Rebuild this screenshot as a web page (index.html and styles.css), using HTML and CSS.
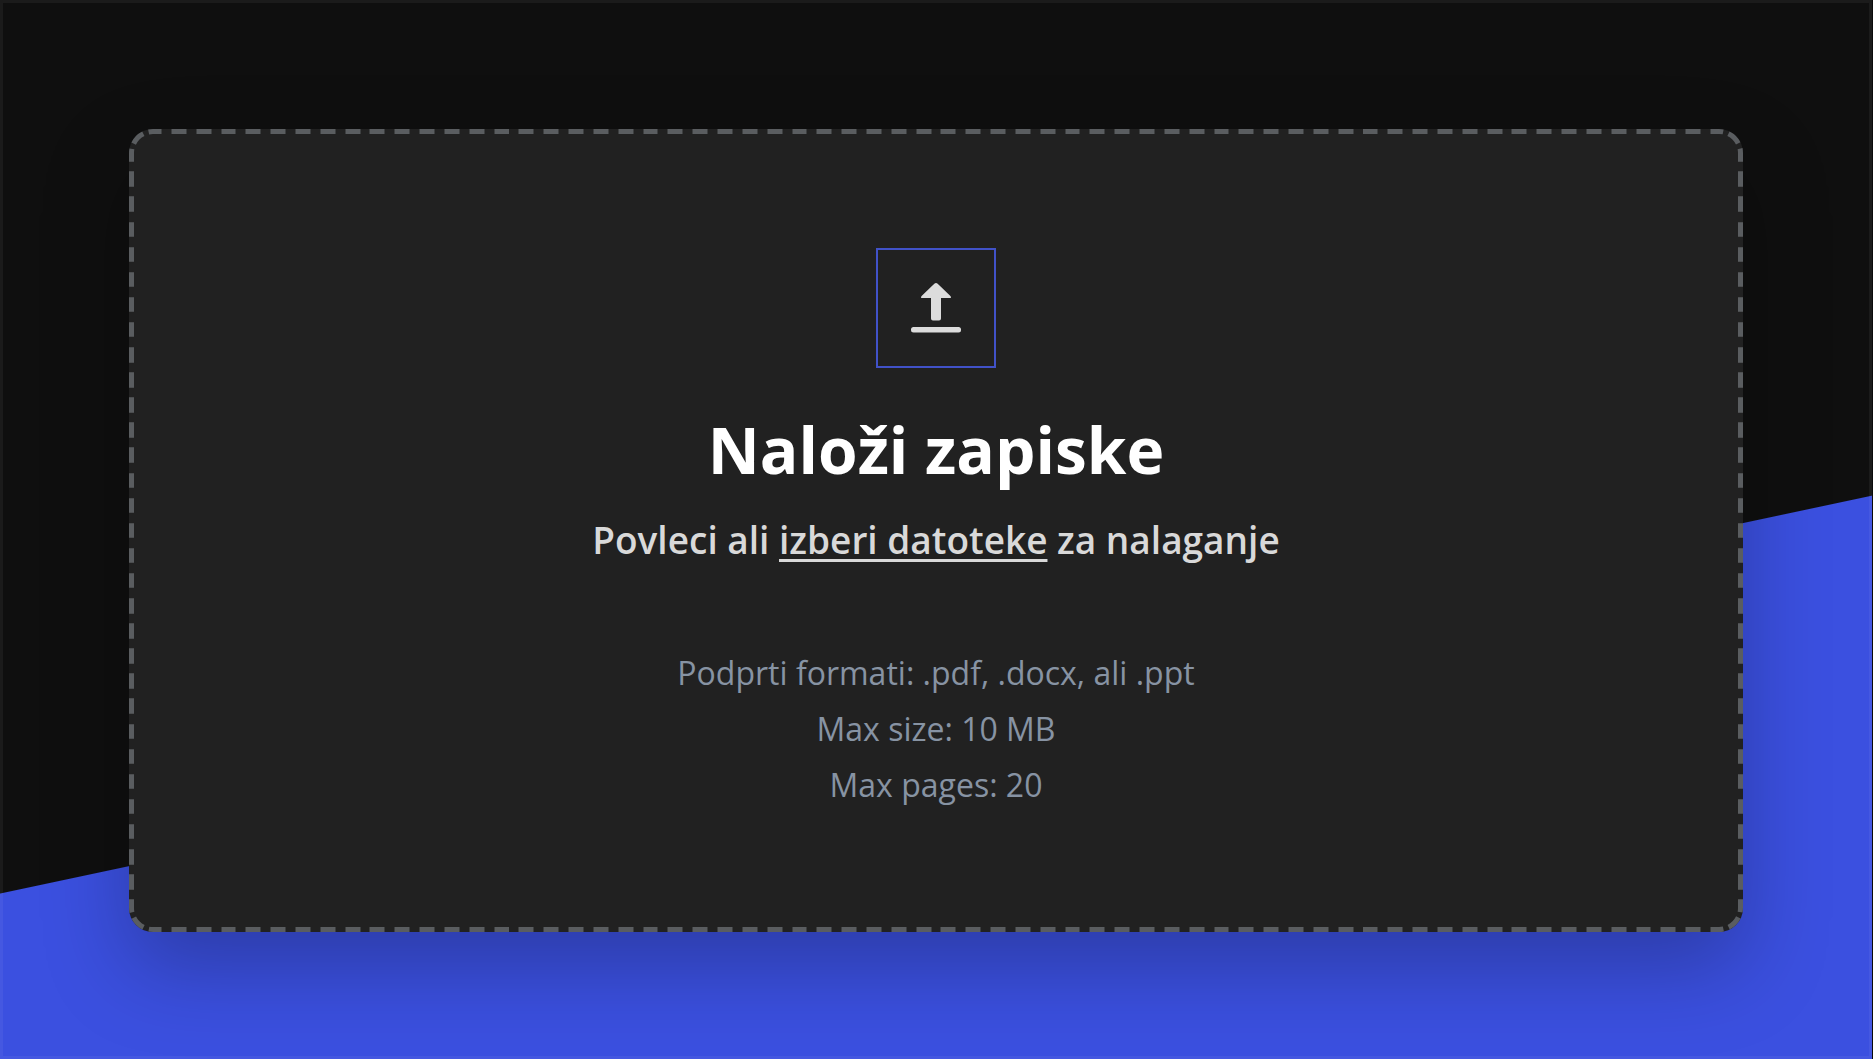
FILE: index.html
```html
<!DOCTYPE html>
<html lang="sl">

<head>
  <meta charset="UTF-8">
  <meta name="viewport" content="width=device-width, initial-scale=1.0">
  <title>Naloži zapiske</title>
  <link rel="stylesheet" href="styles.css">
</head>

<body>
  <main class="page">
    <section class="dropzone">
      <div class="icon-box">
        <svg class="upload-icon" viewBox="0 0 52 52" aria-hidden="true">
          <path d="M24.3 1.8Q26 .2 27.7 1.8L40.4 14Q42 16 39.6 16H31V36.5Q31 38.5 29 38.5H23Q21 38.5 21 36.5V16H12.4Q10 16 11.6 14Z" />
          <rect x="1" y="45" width="50" height="5.5" rx="2.5" />
        </svg>
      </div>
      <h1 class="title">Naloži zapiske</h1>
      <p class="subtitle">Povleci ali <a href="#" class="choose">izberi datoteke</a> za nalaganje</p>
      <div class="info">
        <p>Podprti formati: .pdf, .docx, ali .ppt</p>
        <p>Max size: 10 MB</p>
        <p>Max pages: 20</p>
      </div>
    </section>
  </main>
</body>

</html>
```
FILE: styles.css
```css
* {
  box-sizing: border-box;
  margin: 0;
  padding: 0;
}

body {
  font-family: "Open Sans", "Noto Sans", sans-serif;
  background-color: #0f0f0f;
}

.page {
  position: relative;
  display: flex;
  min-height: 100vh;
  padding: 129px 129px 127px;
  border-right: 1px solid #0a0a0a;
  background: linear-gradient(168deg, #0f0f0f calc(50% + 161px), #3b50e0 calc(50% + 162px));
}

/* thin light frame around the page */
.page::after {
  content: "";
  position: absolute;
  inset: 0;
  border: 3px solid rgba(255, 255, 255, 0.05);
  pointer-events: none;
}

.dropzone {
  flex: 1;
  display: flex;
  flex-direction: column;
  align-items: center;
  justify-content: center;
  border: 5px solid transparent;
  border-radius: 24px;
  background: #212121 border-box;
  box-shadow: 0 36px 86px rgba(0, 0, 0, 0.25);
  text-align: center;
  /* long dashes, the corners have their own piece */
  border-image: url("data:image/svg+xml,%3Csvg xmlns='http://www.w3.org/2000/svg' width='75' height='75' fill='none' stroke='%235a5d60' stroke-width='5'%3E%3Cdefs%3E%3Cg id='c'%3E%3Cpath d='M25 2.5H24A21.5 21.5 0 0 0 2.5 24V25' stroke-dasharray='5.5 5.5 13.8 5.5 6 99'/%3E%3Cpath d='M25 2.5H32.5M42.5 2.5H50'/%3E%3C/g%3E%3C/defs%3E%3Cuse href='%23c'/%3E%3Cuse href='%23c' transform='rotate(90 37.5 37.5)'/%3E%3Cuse href='%23c' transform='rotate(180 37.5 37.5)'/%3E%3Cuse href='%23c' transform='rotate(270 37.5 37.5)'/%3E%3C/svg%3E") 25 / 25px round;
}

.icon-box {
  display: flex;
  align-items: center;
  justify-content: center;
  width: 120px;
  height: 120px;
  border: 2px solid #4152c8;
}

.upload-icon {
  width: 52px;
  height: 52px;
  fill: #dcdcdc;
}

.title {
  margin-top: 38px;
  font-size: 64px;
  font-weight: 700;
  line-height: 88px;
  color: #fff;
}

.subtitle {
  margin-top: 22px;
  font-size: 37px;
  font-weight: 600;
  line-height: 48px;
  color: #d9d9d9;
}

.choose {
  color: inherit;
  text-decoration: underline;
  text-decoration-thickness: 3px;
  text-underline-offset: 5px;
  text-decoration-skip-ink: none;
}

.info {
  margin-top: 81px;
  font-size: 32px;
  line-height: 56px;
  color: #8793a3;
}
```
